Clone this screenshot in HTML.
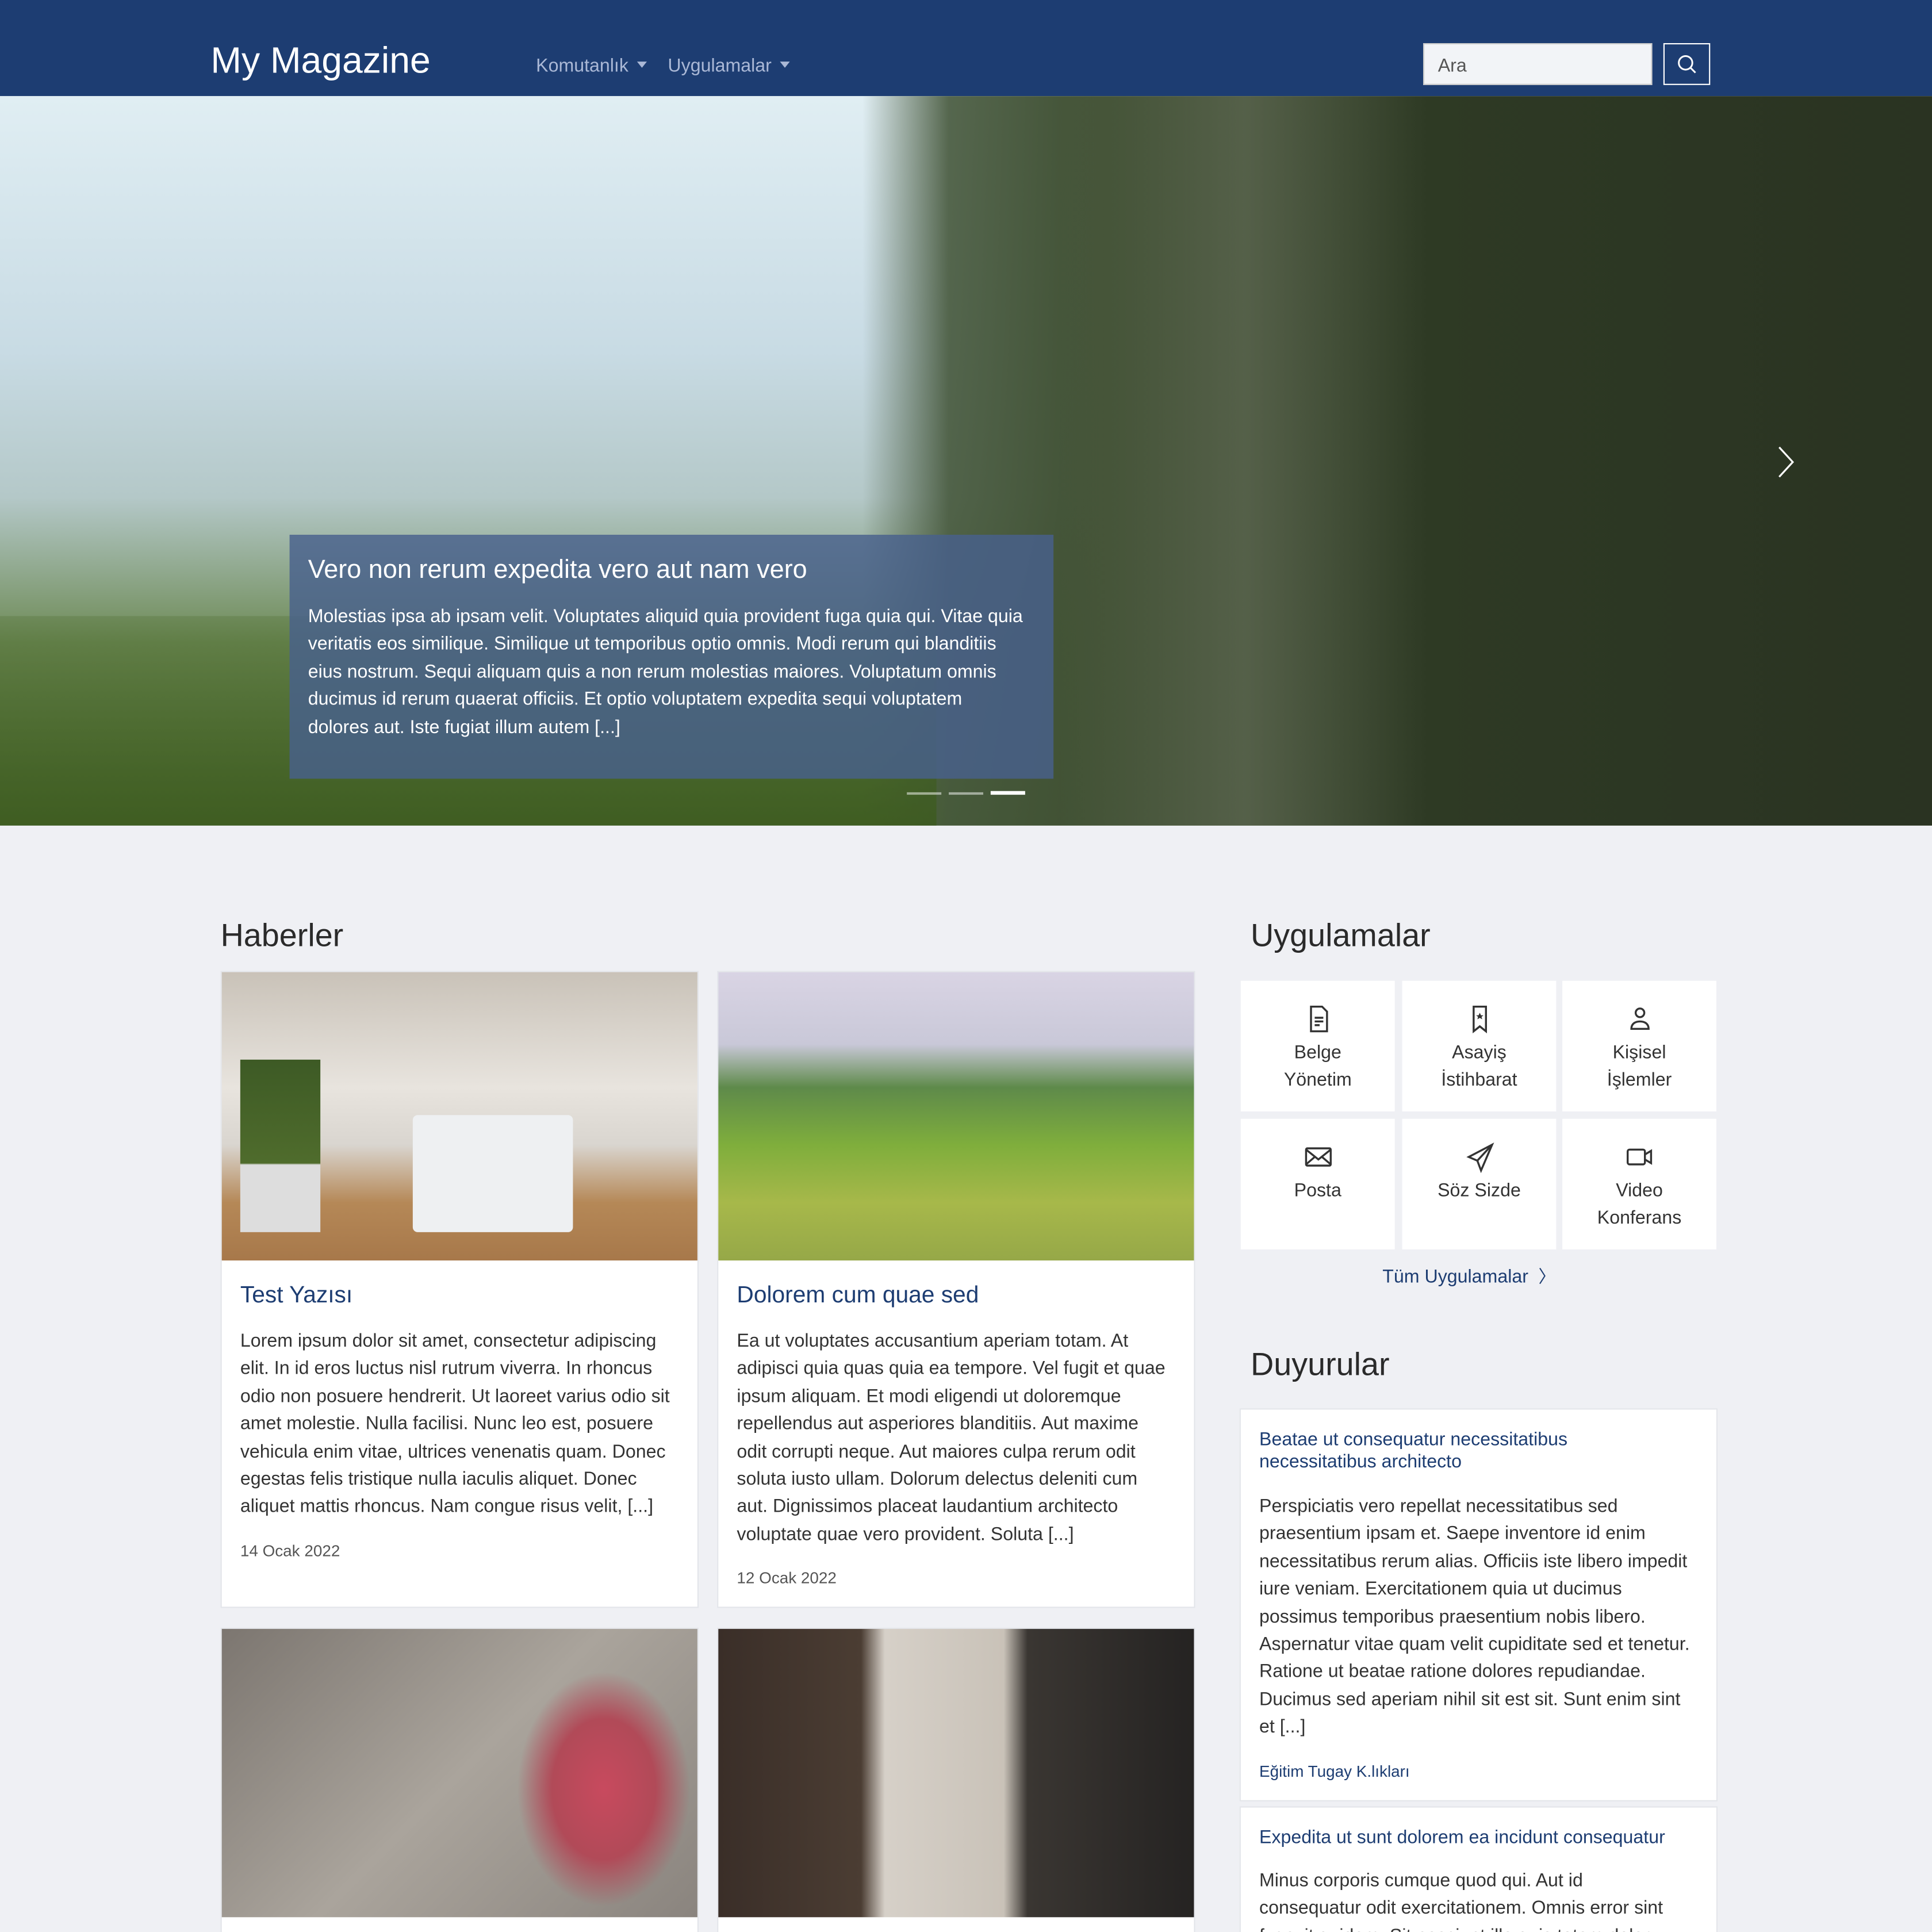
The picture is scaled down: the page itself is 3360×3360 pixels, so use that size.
<!DOCTYPE html>
<html><head><meta charset="utf-8"><style>
*{box-sizing:border-box;margin:0;padding:0}
html,body{width:3360px;height:3360px;overflow:hidden;background:#eff0f4}
#w{width:1568px;height:1568px;transform:scale(2.142857);transform-origin:0 0;position:relative;font-family:"Liberation Sans",sans-serif;color:#212529;overflow:hidden}
.a{position:absolute}
.hdr{left:0;top:0;width:1568px;height:78px;background:#1d3d72}
.nav{color:#aab8d6;font-size:15px;top:45px}
.tri{display:inline-block;border-left:4px solid transparent;border-right:4px solid transparent;border-top:5px solid #aab8d6;margin-left:7px;vertical-align:3px}
.card{background:#fff;border:1px solid #e3e5ea}
.ct{font-size:19px;color:#1d3d72}
.tx{font-size:15px;line-height:22.4px;color:#333}
.dt{font-size:13px;color:#555}
.tile{background:#fff;width:125px;height:106px;text-align:center;font-size:15px;line-height:22.4px;color:#333;padding-top:18px}
.tile svg{display:block;margin:0 auto 4px;width:26px;height:26px;fill:none;stroke:#333;stroke-width:1.6}
h2{font-weight:normal;font-size:26px;color:#2a2a2a;position:absolute}
</style></head><body><div id="w">
<div class="a hdr"></div>
<div class="a" style="left:171px;top:33px;font-size:30px;color:#fff">My Magazine</div>
<div class="a nav" style="left:435px">Komutanlık<span class="tri"></span></div>
<div class="a nav" style="left:542px">Uygulamalar<span class="tri"></span></div>
<div class="a" style="left:1155px;top:35px;width:186px;height:34px;background:#f2f4f7;border:1px solid #ccc;font-size:15px;color:#555;padding:9px 11px">Ara</div>
<div class="a" style="left:1350px;top:35px;width:38px;height:34px;border:1px solid #fff"><svg width="36" height="32" viewBox="0 0 36 32" fill="none" stroke="#fff" stroke-width="1.4"><circle cx="17" cy="15" r="5.5"/><path d="M21 19l4 4"/></svg></div>
<div class="a" style="left:0;top:78px;width:1568px;height:592px;background:linear-gradient(180deg,#e0eef3 0%,#c8dbe4 35%,#b4c8c8 55%,#6d8a55 75%,#4c6b30 100%)"></div>
<div class="a" style="left:700px;top:78px;width:868px;height:592px;background:linear-gradient(90deg,rgba(70,88,60,0) 0,rgba(70,88,60,.9) 70px,#3f4f32 200px,#2e3a24 450px,#2a3322 100%)"></div>
<div class="a" style="left:860px;top:78px;width:300px;height:592px;background:linear-gradient(90deg,rgba(120,130,110,0),rgba(120,128,108,.45),rgba(80,90,70,0))"></div>
<div class="a" style="left:0;top:500px;width:760px;height:170px;background:linear-gradient(180deg,rgba(80,110,50,.3),rgba(60,90,30,.8))"></div>
<svg class="a" style="left:1440px;top:360px" width="20" height="30" fill="none" stroke="#fff" stroke-width="1.5"><path d="M4 3l11 12L4 27"/></svg>
<div class="a" style="left:235px;top:434px;width:620px;height:198px;background:rgba(72,96,140,.82);padding:17px 22px 16px 15px;color:#fff">
<div style="font-size:21px;margin-bottom:15px">Vero non rerum expedita vero aut nam vero</div>
<div style="font-size:15px;line-height:22.4px">Molestias ipsa ab ipsam velit. Voluptates aliquid quia provident fuga quia qui. Vitae quia veritatis eos similique. Similique ut temporibus optio omnis. Modi rerum qui blanditiis eius nostrum. Sequi aliquam quis a non rerum molestias maiores. Voluptatum omnis ducimus id rerum quaerat officiis. Et optio voluptatem expedita sequi voluptatem dolores aut. Iste fugiat illum autem [...]</div></div>
<div class="a" style="left:736px;top:643px;width:28px;height:2px;background:rgba(255,255,255,.5)"></div>
<div class="a" style="left:770px;top:643px;width:28px;height:2px;background:rgba(255,255,255,.5)"></div>
<div class="a" style="left:804px;top:642px;width:28px;height:3px;background:#fff"></div>

<h2 style="left:179px;top:744px">Haberler</h2>
<div class="a card" style="left:179px;top:788px;width:388px;height:517px"></div>
<div class="a" style="left:180px;top:789px;width:386px;height:234px;background:linear-gradient(180deg,#c9c2b8 0%,#e8e4de 40%,#d9d5cf 60%,#b58857 80%,#a7784a 100%)"></div>
<div class="a" style="left:335px;top:905px;width:130px;height:95px;background:#eef0f2;border-radius:4px"></div>
<div class="a" style="left:195px;top:860px;width:65px;height:140px;background:linear-gradient(#3d5a25,#4f6c2c 60%,#ddd 61%)"></div>
<div class="a ct" style="left:195px;top:1041px">Test Yazısı</div>
<div class="a tx" style="left:195px;top:1078px;width:360px">Lorem ipsum dolor sit amet, consectetur adipiscing elit. In id eros luctus nisl rutrum viverra. In rhoncus odio non posuere hendrerit. Ut laoreet varius odio sit amet molestie. Nulla facilisi. Nunc leo est, posuere vehicula enim vitae, ultrices venenatis quam. Donec egestas felis tristique nulla iaculis aliquet. Donec aliquet mattis rhoncus. Nam congue risus velit, [...]</div>
<div class="a dt" style="left:195px;top:1251px">14 Ocak 2022</div>

<div class="a card" style="left:582px;top:788px;width:388px;height:517px"></div>
<div class="a" style="left:583px;top:789px;width:386px;height:234px;background:linear-gradient(180deg,#d9d4e4 0%,#c9c8d8 25%,#5e8a4a 40%,#7fae3c 60%,#a7b84a 80%,#96a848 100%)"></div>
<div class="a ct" style="left:598px;top:1041px">Dolorem cum quae sed</div>
<div class="a tx" style="left:598px;top:1078px;width:352px">Ea ut voluptates accusantium aperiam totam. At adipisci quia quas quia ea tempore. Vel fugit et quae ipsum aliquam. Et modi eligendi ut doloremque repellendus aut asperiores blanditiis. Aut maxime odit corrupti neque. Aut maiores culpa rerum odit soluta iusto ullam. Dolorum delectus deleniti cum aut. Dignissimos placeat laudantium architecto voluptate quae vero provident. Soluta [...]</div>
<div class="a dt" style="left:598px;top:1273px">12 Ocak 2022</div>

<div class="a card" style="left:179px;top:1321px;width:388px;height:260px"></div>
<div class="a" style="left:180px;top:1322px;width:386px;height:234px;background:radial-gradient(ellipse 70px 95px at 310px 130px,#c84a5e,#b14a58 60%,transparent 100%),linear-gradient(135deg,#7c7670,#aaa49c 50%,#8a847e)"></div>
<div class="a card" style="left:582px;top:1321px;width:388px;height:260px"></div>
<div class="a" style="left:583px;top:1322px;width:386px;height:234px;background:linear-gradient(90deg,#3a2e28 0%,#4b3d33 30%,#d6d0c8 35%,#c9c2b8 60%,#3a3632 65%,#252322 100%)"></div>

<h2 style="left:1015px;top:744px">Uygulamalar</h2>
<div class="a tile" style="left:1007px;top:796px"><svg viewBox="0 0 26 26"><path d="M7 3h9l4 4v16H7z"/><path d="M10 12h7M10 15h7M10 18h4"/></svg>Belge<br>Yönetim</div>
<div class="a tile" style="left:1138px;top:796px"><svg viewBox="0 0 26 26"><path d="M8 3h10v20l-5-4-5 4z"/><path d="M13 8l1 2h2l-1.6 1.3.6 2-2-1.2-2 1.2.6-2L10 10h2z" fill="#333" stroke="none"/></svg>Asayiş<br>İstihbarat</div>
<div class="a tile" style="left:1268px;top:796px"><svg viewBox="0 0 26 26"><circle cx="13" cy="8" r="3.5"/><path d="M6 21c0-4 3-6 7-6s7 2 7 6z"/></svg>Kişisel<br>İşlemler</div>
<div class="a tile" style="left:1007px;top:908px"><svg viewBox="0 0 26 26"><rect x="3" y="6" width="20" height="14" rx="1"/><path d="M3 7l10 8 10-8M3 19l7-6M23 19l-7-6"/></svg>Posta</div>
<div class="a tile" style="left:1138px;top:908px"><svg viewBox="0 0 26 26"><path d="M23 3L4 13l7 3 3 8z"/><path d="M11 16L23 3"/></svg>Söz Sizde</div>
<div class="a tile" style="left:1268px;top:908px"><svg viewBox="0 0 26 26"><rect x="3" y="7" width="14" height="12" rx="1.5"/><path d="M17 11l5-3v10l-5-3"/></svg>Video<br>Konferans</div>
<div class="a" style="left:1122px;top:1026px;font-size:15px;color:#1d3d72">Tüm Uygulamalar <span style="font-size:14px;margin-left:4px">〉</span></div>

<h2 style="left:1015px;top:1092px">Duyurular</h2>
<div class="a card" style="left:1006px;top:1143px;width:388px;height:319px"></div>
<div class="a" style="left:1022px;top:1160px;width:300px;font-size:15px;line-height:18px;color:#1d3d72">Beatae ut consequatur necessitatibus necessitatibus architecto</div>
<div class="a tx" style="left:1022px;top:1212px;width:356px">Perspiciatis vero repellat necessitatibus sed praesentium ipsam et. Saepe inventore id enim necessitatibus rerum alias. Officiis iste libero impedit iure veniam. Exercitationem quia ut ducimus possimus temporibus praesentium nobis libero. Aspernatur vitae quam velit cupiditate sed et tenetur. Ratione ut beatae ratione dolores repudiandae. Ducimus sed aperiam nihil sit est sit. Sunt enim sint et [...]</div>
<div class="a" style="left:1022px;top:1430px;font-size:13px;color:#1d3d72">Eğitim Tugay K.lıkları</div>
<div class="a card" style="left:1006px;top:1466px;width:388px;height:140px"></div>
<div class="a" style="left:1022px;top:1483px;font-size:15px;color:#1d3d72">Expedita ut sunt dolorem ea incidunt consequatur</div>
<div class="a tx" style="left:1022px;top:1516px;width:340px">Minus corporis cumque quod qui. Aut id consequatur odit exercitationem. Omnis error sint fugavit quidem. Sit nesciunt illo quis totam dolor</div>
</div></body></html>
